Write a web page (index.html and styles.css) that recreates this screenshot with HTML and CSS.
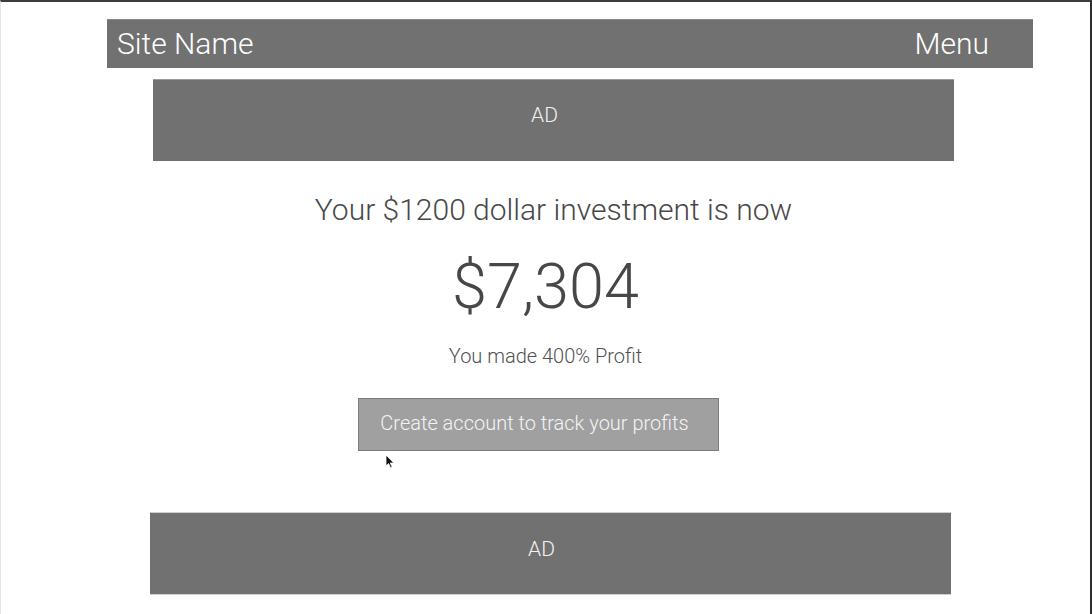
FILE: index.html
```html
<!DOCTYPE html>
<html>
<head>
<meta charset="utf-8">
<link rel="stylesheet" href="styles.css">
</head>
<body>
<div class="frame">
  <header class="topbar">
    <span class="site-name">Site Name</span>
    <span class="menu">Menu</span>
  </header>
  <div class="ad ad-top">AD</div>
  <h1 class="lead">Your $1200 dollar investment is now</h1>
  <div class="amount">$7,304</div>
  <p class="profit">You made 400% Profit</p>
  <div class="cta-row">
    <button class="cta">Create account to track your profits</button>
  </div>
  <div class="ad ad-bottom">AD</div>
  <svg class="cursor" width="10" height="15" viewBox="0 0 10 15"><path d="M1 1 L1 12 L3.6 9.6 L5.6 14 L7.2 13.3 L5.3 9 L8.8 9 Z" fill="#111" stroke="#fff" stroke-width="0.8"/></svg>
</div>
</body>
</html>
```
FILE: styles.css
```css
html, body {
  margin: 0;
  padding: 0;
  background: #fff;
}
.frame {
  position: relative;
  box-sizing: border-box;
  width: 1092px;
  height: 614px;
  border-top: 2px solid #3c3c3c;
  border-right: 2px solid #2e2e2e;
  border-left: 1px solid #e6e6e6;
  overflow: hidden;
  font-family: Roboto, "Liberation Sans", sans-serif;
  font-weight: 300;
  display: flex;
  flex-direction: column;
}
.topbar {
  margin: 17px 0 0 106px;
  width: 926px;
  height: 49px;
  background: #717171;
  border-top: 1px solid #8a8a8a;
  display: flex;
  align-items: center;
  justify-content: space-between;
  color: #fff;
  font-size: 30px;
  box-sizing: border-box;
  padding: 0 44px 1px 10px;
}
.ad {
  background: #717171;
  color: #f2f2f2;
  display: flex;
  align-items: center;
  justify-content: center;
  font-size: 21px;
  box-sizing: border-box;
  padding-right: 18px;
}
.ad-top {
  margin: 11px 0 0 152px;
  width: 801px;
  height: 82px;
  border-top: 1px solid #9a9a9a;
  padding-bottom: 12px;
}
.lead {
  margin: 31px 0 0 0;
  padding-left: 16px;
  text-align: center;
  font-weight: 300;
  font-size: 30px;
  line-height: 36px;
  color: #484848;
}
.amount {
  margin: 24px 0 0 0;
  text-align: center;
  font-size: 63px;
  line-height: 70px;
  color: #474747;
}
.profit {
  margin: 22px 0 0 0;
  padding-left: 0;
  text-align: center;
  font-size: 20px;
  line-height: 24px;
  color: #505050;
}
.cta-row {
  display: flex;
  margin: 30px 0 0 357px;
}
.cta {
  width: 361px;
  height: 53px;
  background: #a0a0a0;
  border: 1px solid #7c7c7c;
  color: #f4f4f4;
  font-family: inherit;
  font-weight: 300;
  font-size: 20px;
  padding: 0 8px 4px 0;
}
.ad-bottom {
  margin: 61px 0 0 149px;
  width: 801px;
  height: 83px;
  border-top: 1px solid #cfcfcf;
  border-bottom: 1px solid #cfcfcf;
  padding-bottom: 10px;
}
.cursor {
  position: absolute;
  left: 384px;
  top: 452px;
}
```
